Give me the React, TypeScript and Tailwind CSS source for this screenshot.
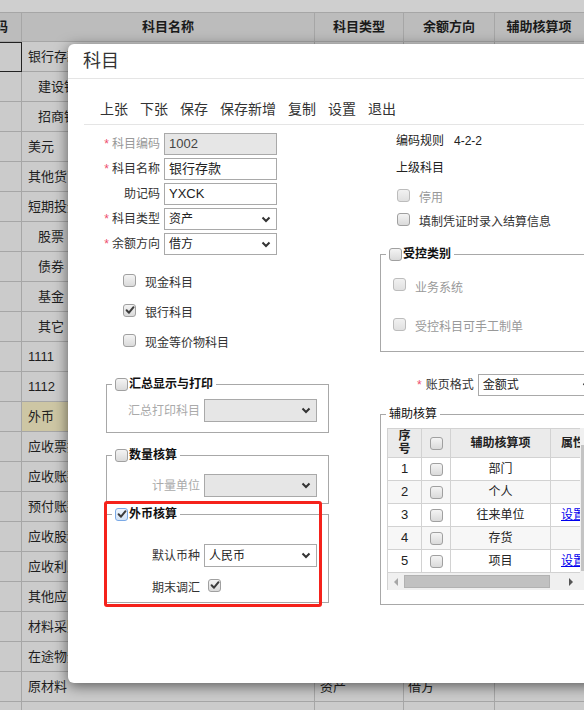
import React from "react";

type CBProps = { checked?: boolean; disabled?: boolean; focus?: boolean; className?: string };

function CB({ checked, disabled, focus, className = "" }: CBProps) {
  const base = "inline-flex items-center justify-center w-[13px] h-[13px] rounded-[3px] border shrink-0";
  const look = focus
    ? "border-[#7aa9e6] bg-linear-to-b from-[#eef5fd] to-[#d3e3f6]"
    : disabled
    ? "border-[#bcbcbc] bg-linear-to-b from-[#f1f1f1] to-[#e0e0e0]"
    : "border-[#a0a0a0] bg-linear-to-b from-[#f4f4f4] to-[#dadada]";
  return (
    <span className={`${base} ${look} ${className}`}>
      {checked && (
        <svg width="10" height="10" viewBox="0 0 10 10">
          <path d="M1.6 5.3 L4 7.7 L8.5 2.2" fill="none" stroke="#3c3c3c" strokeWidth="2" strokeLinecap="round" strokeLinejoin="round" />
        </svg>
      )}
    </span>
  );
}

function Chevron() {
  return (
    <svg width="10" height="7" viewBox="0 0 10 7">
      <path d="M1.5 1.5 L5 5 L8.5 1.5" fill="none" stroke="#333" strokeWidth="2" />
    </svg>
  );
}

function Sel({ value = "", disabled, className = "" }: { value?: string; disabled?: boolean; className?: string }) {
  return (
    <div
      className={`flex items-center justify-between border border-[#a9a9a9] pl-[4px] pr-[5px] ${
        disabled ? "bg-[#e6e6e6]" : "bg-white"
      } ${className}`}
    >
      <span className="text-[#222]">{value}</span>
      <Chevron />
    </div>
  );
}

function Legend({ check, checked, focus, bold = true, children }: { check?: boolean; checked?: boolean; focus?: boolean; bold?: boolean; children: React.ReactNode }) {
  return (
    <legend className="ml-[5px] px-[3px]">
      <span className="flex items-center h-[18px]">
        {check && <CB checked={checked} focus={focus} />}
        <span className={bold ? "ml-[1px] font-bold text-[#111]" : "text-[#111]"}>{children}</span>
      </span>
    </legend>
  );
}

const bgRows: { name: string; lvl: number; hl?: boolean }[] = [
  { name: "银行存款", lvl: 1 },
  { name: "建设银行", lvl: 2 },
  { name: "招商银行", lvl: 2 },
  { name: "美元", lvl: 1 },
  { name: "其他货币资金", lvl: 1 },
  { name: "短期投资", lvl: 1 },
  { name: "股票", lvl: 2 },
  { name: "债券", lvl: 2 },
  { name: "基金", lvl: 2 },
  { name: "其它", lvl: 2 },
  { name: "1111", lvl: 1 },
  { name: "1112", lvl: 1 },
  { name: "外币", lvl: 1, hl: true },
  { name: "应收票据", lvl: 1 },
  { name: "应收账款", lvl: 1 },
  { name: "预付账款", lvl: 1 },
  { name: "应收股利", lvl: 1 },
  { name: "应收利息", lvl: 1 },
  { name: "其他应收款", lvl: 1 },
  { name: "材料采购", lvl: 1 },
  { name: "在途物资", lvl: 1 },
  { name: "原材料", lvl: 1 },
  { name: "材料成本差异", lvl: 1 },
];

function BackgroundTable() {
  return (
    <div className="ml-[-40px] w-[680px]">
      <div className="grid grid-cols-[62px_293px_89px_91px_145px] h-[30px] bg-[#bcbcbc] border-t border-b border-[#a6a6a6] font-bold text-[13px] text-[#1a1a1a]">
        <div className="border-r border-[#a6a6a6] flex items-center justify-end pr-[13px]">编码</div>
        <div className="border-r border-[#a6a6a6] flex items-center justify-center">科目名称</div>
        <div className="border-r border-[#a6a6a6] flex items-center justify-center">科目类型</div>
        <div className="border-r border-[#a6a6a6] flex items-center justify-center">余额方向</div>
        <div className="border-r border-[#a6a6a6] flex items-center justify-center pr-[56px]">辅助核算项</div>
      </div>
      {bgRows.map((r, i) => (
        <div key={i} className="grid grid-cols-[62px_293px_89px_91px_145px] h-[30px] text-[13px] text-[#1e1e1e]">
          <div className={`border-r border-b border-[#a6a6a6] ${i === 0 ? "outline outline-1 outline-[#222] -outline-offset-1" : ""}`} />
          <div className={`border-r border-b border-[#a6a6a6] flex items-center ${r.lvl === 2 ? "pl-[16px]" : "pl-[6px]"} ${r.hl ? "bg-[#cdc6a4]" : ""}`}>
            {r.name}
          </div>
          <div className={`border-r border-b border-[#a6a6a6] flex items-center pl-[5px] ${r.hl ? "bg-[#cdc6a4]" : ""}`}>资产</div>
          <div className={`border-r border-b border-[#a6a6a6] flex items-center pl-[4px] ${r.hl ? "bg-[#cdc6a4]" : ""}`}>借方</div>
          <div className={`border-r border-b border-[#a6a6a6] ${r.hl ? "bg-[#cdc6a4]" : ""}`} />
        </div>
      ))}
    </div>
  );
}

const formRows = [
  { label: "科目编码", req: true, dis: true, kind: "input", value: "1002" },
  { label: "科目名称", req: true, kind: "input", value: "银行存款" },
  { label: "助记码", kind: "input", value: "YXCK" },
  { label: "科目类型", req: true, kind: "select", value: "资产" },
  { label: "余额方向", req: true, kind: "select", value: "借方" },
];

const auxRows = [
  { n: "1", name: "部门", link: false },
  { n: "2", name: "个人", link: false },
  { n: "3", name: "往来单位", link: true },
  { n: "4", name: "存货", link: false },
  { n: "5", name: "项目", link: true },
];

function AuxTable() {
  return (
    <div className="ml-[6px] mt-[5px] w-[210px] flex">
      <div className="w-[193px] overflow-hidden border-l border-t border-[#d2d2d2]">
        <div className="w-[207px]">
          <div className="grid grid-cols-[34px_29px_100px_44px] h-[29px] bg-[#ebebeb] border-b border-[#d2d2d2] font-bold text-[#222]">
            <div className="border-r border-[#d2d2d2] flex flex-col items-center justify-center leading-[13px]">
              <span>序</span>
              <span>号</span>
            </div>
            <div className="border-r border-[#d2d2d2] flex items-center justify-center">
              <CB />
            </div>
            <div className="border-r border-[#d2d2d2] flex items-center justify-center">辅助核算项</div>
            <div className="flex items-center justify-center">属性</div>
          </div>
          {auxRows.map((r, i) => (
            <div
              key={r.n}
              className={`grid grid-cols-[34px_29px_100px_44px] h-[23px] border-b border-[#d2d2d2] text-[#222] ${
                i % 2 === 1 ? "bg-[#f7f7f7]" : "bg-white"
              }`}
            >
              <div className="border-r border-[#d2d2d2] flex items-center justify-center text-[13px]">{r.n}</div>
              <div className="border-r border-[#d2d2d2] flex items-center justify-center">
                <CB />
              </div>
              <div className="border-r border-[#d2d2d2] flex items-center justify-center">{r.name}</div>
              <div className="flex items-center justify-center">
                {r.link && <span className="text-[#0000ee] underline">设置</span>}
              </div>
            </div>
          ))}
        </div>
        <div className="h-[17px] bg-[#f0f0f0] flex items-center">
          <svg className="ml-[5px]" width="6" height="8" viewBox="0 0 6 8">
            <path d="M5 0 L1 4 L5 8 Z" fill="#a6a6a6" />
          </svg>
          <div className="ml-[5px] w-[146px] h-[13px] bg-[#c1c1c1] border border-[#b2b2b2]" />
          <svg className="ml-[18px]" width="6" height="8" viewBox="0 0 6 8">
            <path d="M1 0 L5 4 L1 8 Z" fill="#555" />
          </svg>
        </div>
      </div>
      <div className="w-[17px] bg-[#f0f0f0] pt-[17px]">
        <div className="ml-[1px] w-[15px] h-[126px] bg-[#c4c4c4]" />
      </div>
    </div>
  );
}

function Dialog() {
  return (
    <div className="absolute left-[68px] top-[44px] w-[540px] h-[639px] rounded-[6px] bg-white shadow-[0_3px_14px_rgba(0,0,0,0.55)] text-[12px] text-[#333] overflow-hidden">
      <div className="h-[35px] border-b border-[#e5e5e5] pl-[15px] flex items-center text-[18px] text-[#333]">科目</div>
      <div className="mx-[16px] h-[46px] border-b border-[#e5e5e5] pl-[16px] pt-[21px] flex gap-[12px] text-[14px] leading-[18px] text-[#333]">
        {["上张", "下张", "保存", "保存新增", "复制", "设置", "退出"].map((t) => (
          <span key={t}>{t}</span>
        ))}
      </div>
      <div className="flex">
        {/* left column */}
        <div className="w-[312px] shrink-0">
          <div className="pt-[8px]">
            {formRows.map((r) => (
              <div key={r.label} className="flex items-center h-[22px] mb-[3px]">
                <div className="w-[96px] pr-[4px] text-right">
                  {r.req && <span className="text-[#ee4d6d] mr-[3px]">*</span>}
                  <span className={r.dis ? "text-[#999]" : "text-[#333]"}>{r.label}</span>
                </div>
                {r.kind === "input" ? (
                  <div
                    className={`w-[113px] h-[22px] border border-[#a9a9a9] pl-[4px] flex items-center ${
                      r.dis ? "bg-[#e6e6e6] text-[#444]" : "bg-white text-[#222]"
                    } text-[13px]`}
                  >
                    {r.value}
                  </div>
                ) : (
                  <Sel value={r.value} className="w-[113px] h-[22px]" />
                )}
              </div>
            ))}
          </div>
          <div className="mt-[13px]">
            {[
              { t: "现金科目", c: false },
              { t: "银行科目", c: true },
              { t: "现金等价物科目", c: false },
            ].map((x) => (
              <div key={x.t} className="flex items-center h-[30px] pl-[55px]">
                <CB checked={x.c} className="mb-[6px]" />
                <span className="ml-[9px] text-[#333]">{x.t}</span>
              </div>
            ))}
          </div>

          <fieldset className="ml-[38px] w-[223px] mt-[17px] border border-[#a8a8a8] pb-[10px]">
            <Legend check>汇总显示与打印</Legend>
            <div className="mt-[6px] flex items-center">
              <div className="w-[93px] text-right text-[#aaa]">汇总打印科目</div>
              <Sel disabled className="ml-[4px] w-[113px] h-[23px]" />
            </div>
          </fieldset>

          <fieldset className="ml-[38px] w-[223px] mt-[13px] border border-[#a8a8a8] pb-[6px]">
            <Legend check>数量核算</Legend>
            <div className="mt-[10px] flex items-center">
              <div className="w-[93px] text-right text-[#aaa]">计量单位</div>
              <Sel disabled className="ml-[4px] w-[113px] h-[23px]" />
            </div>
          </fieldset>

          <fieldset className="ml-[38px] w-[223px] mt-[1px] border border-[#a8a8a8] pb-[3px]">
            <Legend check checked focus>
              外币核算
            </Legend>
            <div className="mt-[21px] flex items-center">
              <div className="w-[93px] text-right text-[#333]">默认币种</div>
              <Sel value="人民币" className="ml-[4px] w-[113px] h-[23px]" />
            </div>
            <div className="mt-[10px] h-[22px] flex items-center">
              <div className="w-[93px] text-right text-[#333]">期末调汇</div>
              <CB checked className="ml-[8px] mb-[6px]" />
            </div>
          </fieldset>
        </div>

        {/* right column */}
        <div className="flex-1 min-w-0">
          <div className="mt-[7px] h-[18px] pl-[16px] flex items-center text-[#222]">
            <span>编码规则</span>
            <span className="ml-[10px]">4-2-2</span>
          </div>
          <div className="mt-[9px] h-[18px] pl-[16px] flex items-center text-[#222]">上级科目</div>
          <div className="mt-[11px] h-[20px] pl-[17px] flex items-center">
            <CB disabled className="mb-[6px]" />
            <span className="ml-[9px] text-[#999]">停用</span>
          </div>
          <div className="mt-[4px] h-[20px] pl-[17px] flex items-center">
            <CB className="mb-[5px]" />
            <span className="ml-[9px] text-[#333]">填制凭证时录入结算信息</span>
          </div>

          <fieldset className="mt-[13px] w-[240px] border border-[#a8a8a8] pb-[14px]">
            <Legend check>受控类别</Legend>
            <div className="mt-[15px] h-[20px] pl-[12px] flex items-center">
              <CB disabled className="mb-[7px]" />
              <span className="ml-[9px] text-[#999]">业务系统</span>
            </div>
            <div className="mt-[19px] h-[20px] pl-[12px] flex items-center">
              <CB disabled className="mb-[6px]" />
              <span className="ml-[9px] text-[#999]">受控科目可手工制单</span>
            </div>
          </fieldset>

          <div className="mt-[22px] h-[22px] pl-[37px] flex items-center">
            <span className="text-[#ee4d6d]">*</span>
            <span className="ml-[4px] text-[#333]">账页格式</span>
            <Sel value="金额式" className="ml-[4px] w-[120px] h-[22px] shrink-0" />
          </div>

          <fieldset className="mt-[9px] w-[240px] border border-[#a8a8a8] pb-[14px]">
            <Legend bold={false}>辅助核算</Legend>
            <AuxTable />
          </fieldset>
        </div>
      </div>
    </div>
  );
}

export default function App() {
  return (
    <div className="relative w-[584px] h-[710px] overflow-hidden bg-[#cbcbcb] font-['Liberation_Sans','Noto_Sans_CJK_SC',sans-serif]">
      <div className="h-[12px] bg-[#cfcfcf]" />
      <BackgroundTable />
      <Dialog />
      <div className="absolute left-[104px] top-[501px] w-[218px] h-[106px] border-[3px] border-[#f5221b] rounded-[3px]" />
    </div>
  );
}
